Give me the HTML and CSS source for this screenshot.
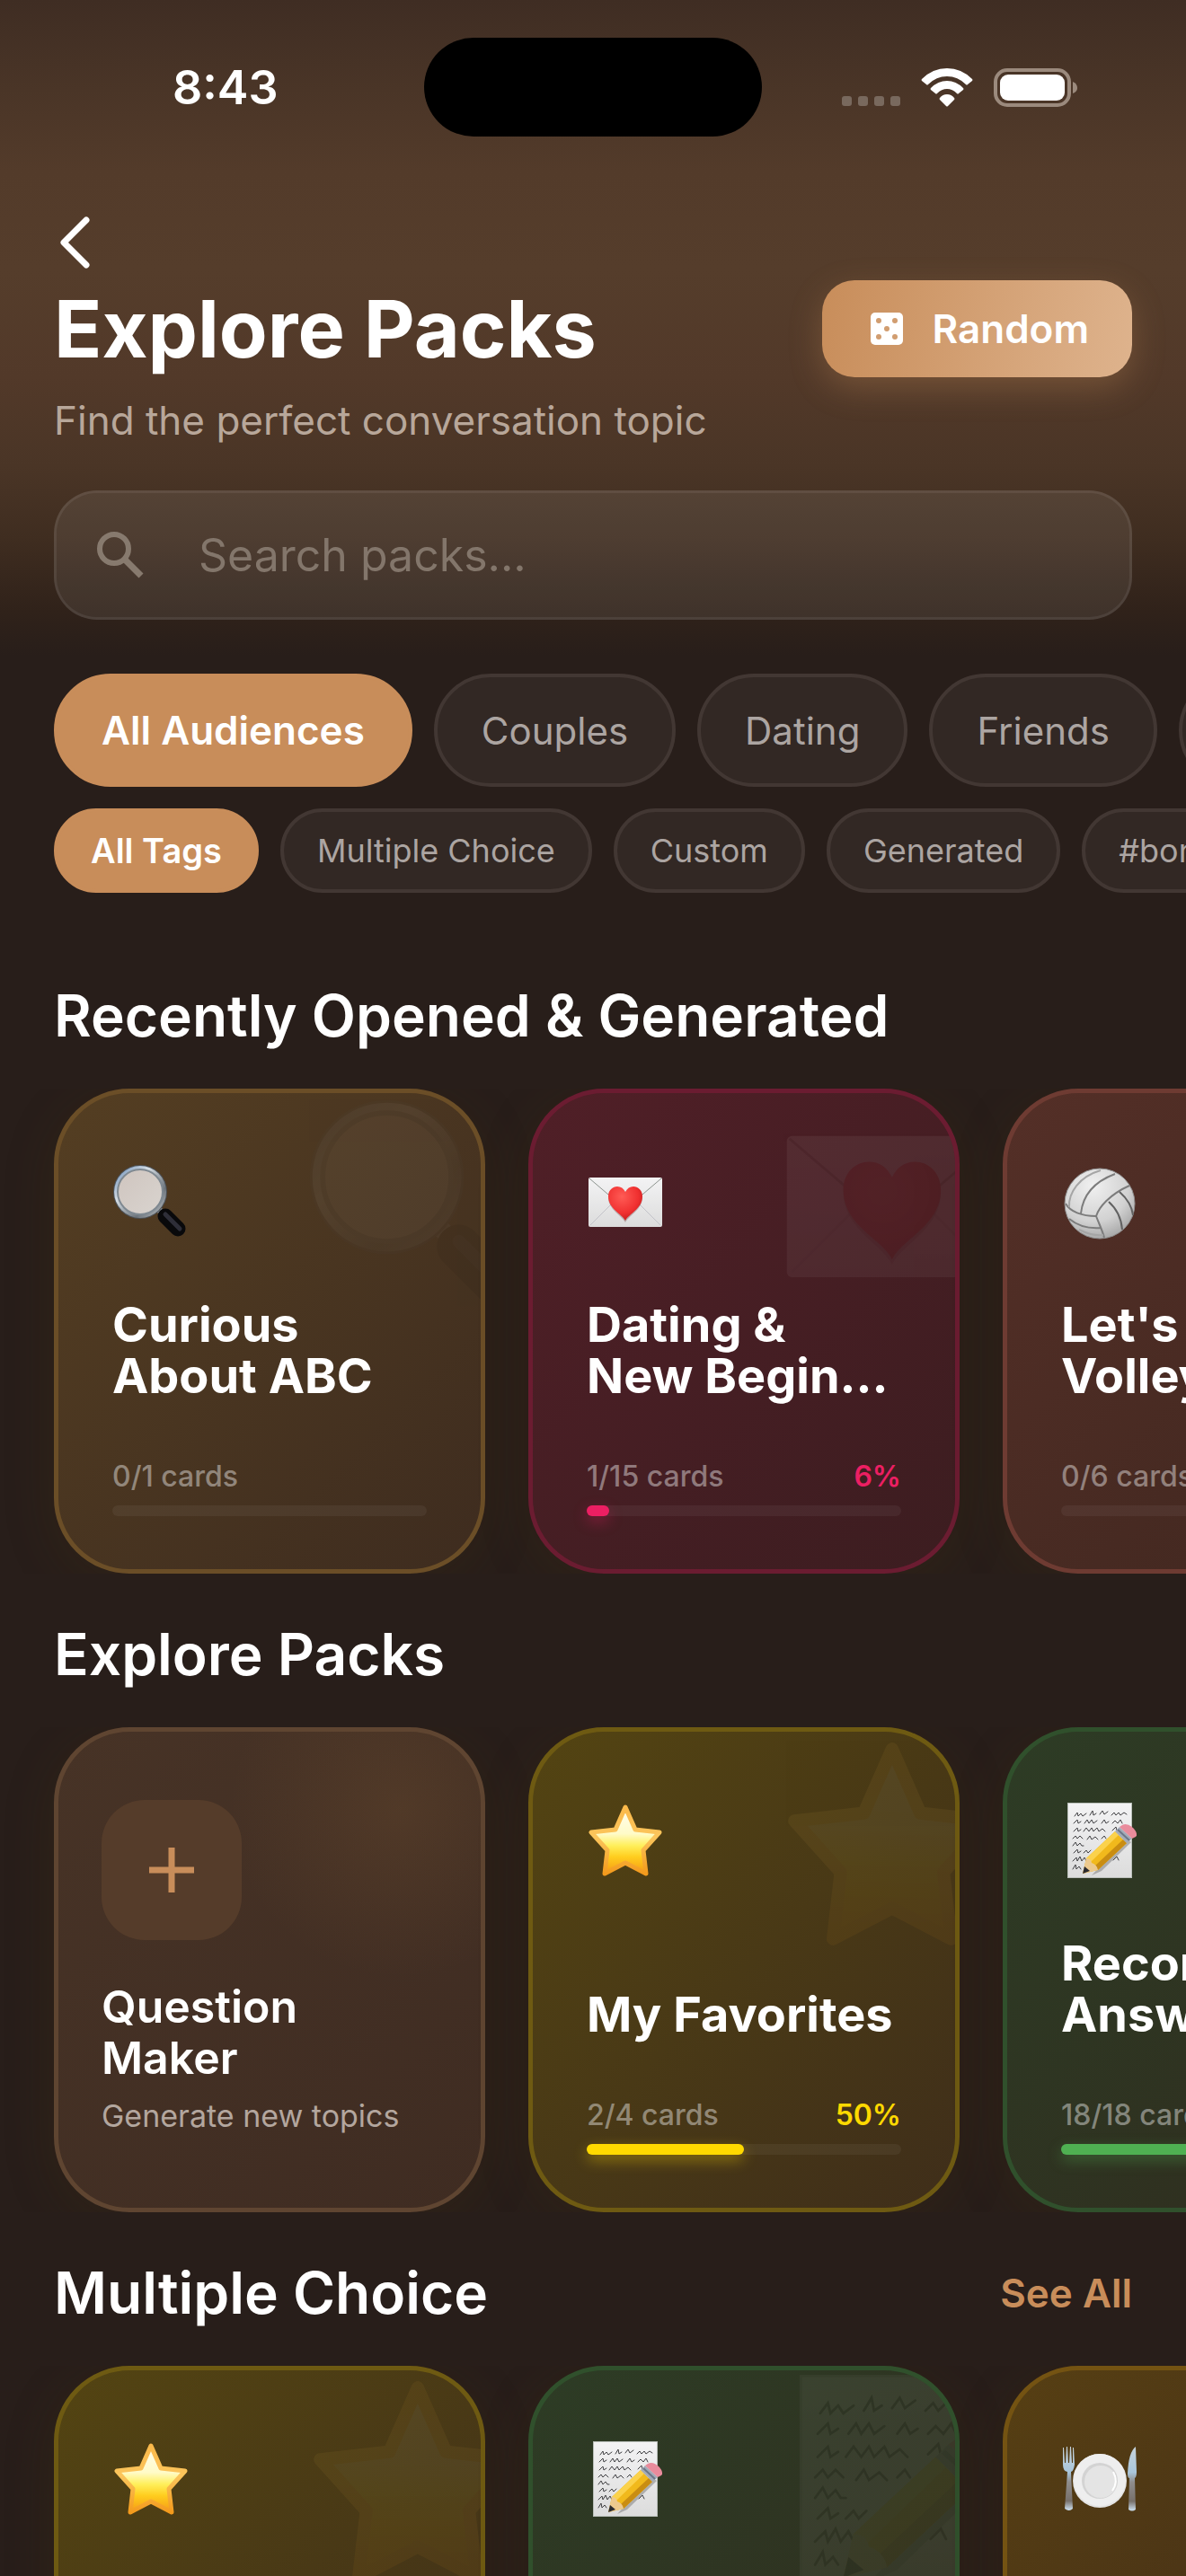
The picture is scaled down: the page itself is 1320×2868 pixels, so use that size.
FILE: index.html
```html
<!DOCTYPE html>
<html lang="en">
  <head>
    <meta charset="UTF-8" />
    <meta name="viewport" content="width=device-width, initial-scale=1.0" />
    <title>Explore Packs</title>
    <link rel="stylesheet" href="styles.css">
  </head>
  <body>
    <!-- Emoji symbols, shared by the small icon and the faded one behind it -->
    <svg class="sprite" aria-hidden="true">
      <defs>
        <linearGradient id="lens-ring" x1="0" y1="0" x2="1" y2="1">
          <stop offset="0" stop-color="#5f86b5" />
          <stop offset="0.35" stop-color="#d5dde4" />
          <stop offset="0.7" stop-color="#6d757c" />
          <stop offset="1" stop-color="#c9ced2" />
        </linearGradient>
        <linearGradient id="lens-glass" x1="0" y1="0" x2="1" y2="1">
          <stop offset="0" stop-color="#cfc5bf" />
          <stop offset="1" stop-color="#d9d4cf" />
        </linearGradient>
        <linearGradient id="paper" x1="0" y1="0" x2="0" y2="1">
          <stop offset="0" stop-color="#f3f3f4" />
          <stop offset="1" stop-color="#dcdcdc" />
        </linearGradient>
        <radialGradient id="heart" cx="0.4" cy="0.3" r="0.8">
          <stop offset="0" stop-color="#ff5b55" />
          <stop offset="0.6" stop-color="#f03030" />
          <stop offset="1" stop-color="#b81717" />
        </radialGradient>
        <radialGradient id="ball" cx="0.4" cy="0.25" r="0.85">
          <stop offset="0" stop-color="#f0f0f0" />
          <stop offset="0.6" stop-color="#d2d2d2" />
          <stop offset="1" stop-color="#9b9b9b" />
        </radialGradient>
        <linearGradient id="star" x1="0" y1="0" x2="0" y2="1">
          <stop offset="0" stop-color="#fffef0" />
          <stop offset="0.4" stop-color="#fffbc8" />
          <stop offset="0.58" stop-color="#ffef5a" />
          <stop offset="0.75" stop-color="#ffcd1e" />
          <stop offset="1" stop-color="#f59a14" />
        </linearGradient>
        <linearGradient id="star-edge" x1="0" y1="0" x2="0" y2="1">
          <stop offset="0" stop-color="#fbb94a" />
          <stop offset="0.45" stop-color="#fbc55c" />
          <stop offset="1" stop-color="#f39a1c" />
        </linearGradient>
        <linearGradient id="metal" x1="0" y1="0" x2="0" y2="1">
          <stop offset="0" stop-color="#c6d2da" />
          <stop offset="0.4" stop-color="#a9c6db" />
          <stop offset="0.55" stop-color="#8f8d8d" />
          <stop offset="0.85" stop-color="#77706b" />
          <stop offset="1" stop-color="#cfe3f3" />
        </linearGradient>

        <symbol id="magnifier" viewBox="0 0 84 84">
          <path d="M50 49L57 56" stroke="#8b9196" stroke-width="7" />
          <path d="M59 58L73 72" stroke="#09090b" stroke-width="17" stroke-linecap="round" />
          <path d="M59 56L75 72" stroke="#2e2e38" stroke-width="5" stroke-linecap="round" />
          <circle cx="31" cy="31" r="30" fill="#4c5157" />
          <circle cx="31" cy="31" r="29" fill="url(#lens-ring)" />
          <circle cx="31" cy="31" r="25" fill="url(#lens-glass)" stroke="#7f8991" stroke-width="2" />
        </symbol>

        <symbol id="letter" viewBox="0 0 84 84">
          <rect x="2" y="15" width="82" height="55" rx="2" fill="url(#paper)" />
          <path d="M4 68L34 38M82 68L52 38" stroke="#c3c3c9" fill="none" />
          <path d="M3 16L37 45Q43 49 49 45L83 16" stroke="#8d948f" fill="none" />
          <path d="M43 65C39 57 24 51 24 37C24 29 29 26 34 26C38 26 41 28 43 32C45 28 48 26 52 26C57 26 62 29 62 37C62 51 47 57 43 65Z" fill="#7a5a5a" opacity="0.4" />
          <path d="M43 63C39 55 24 50 24 36C24 29 29 25 34 25C38 25 41 27 43 31C45 27 48 25 52 25C57 25 62 29 62 36C62 50 47 55 43 63Z" fill="url(#heart)" />
        </symbol>

        <symbol id="volleyball" viewBox="0 0 84 84">
          <circle cx="43" cy="44" r="39" fill="url(#ball)" stroke="#8f8f8f" />
          <g fill="none" stroke="#7c7c7c" stroke-width="2">
            <path d="M39 58C23 58 10 53 5 44" />
            <path d="M39 58C42 48 54 34 76 24" />
            <path d="M39 58C42 66 46 74 48 82" />
            <path d="M22 55C24 36 36 20 60 11" />
            <path d="M9 48C8 32 20 14 44 7" stroke="#a5a5a5" />
            <path d="M53 42C62 50 67 60 68 73" stroke="#626262" />
            <path d="M65 31C73 38 79 48 80 57" stroke="#626262" />
            <path d="M9 61C20 70 34 72 45 71" />
            <path d="M20 73C30 78 40 80 47 79" stroke="#a5a5a5" />
          </g>
        </symbol>

        <symbol id="gold-star" viewBox="0 0 84 84">
          <path d="M43 5L54 30L81 33L63 53L66 79L43 67L20 79L23 53L5 33L32 30Z" fill="url(#star)" stroke="url(#star-edge)" stroke-width="5" stroke-linejoin="round" />
        </symbol>

        <symbol id="memo" viewBox="0 0 84 84">
          <rect x="7" y="0" width="72" height="84" fill="#b9bfb9" />
          <rect x="8" y="1" width="70" height="82" fill="url(#paper)" />
          <g fill="none" stroke="#3f3f42" stroke-linecap="round">
            <path d="M15 15l3-4 1 4 3-3 2 3 4-3M32 14l3-5 1 5 3-2M43 13l3-4 2 4 4-3M56 14l3-3 2 3 3-3 2 3 4-3 3 2" />
            <path d="M14 23l4-4 1 4 3-2M26 23l3-4 2 4 3-4 2 4 4-3M45 23l3-4 2 4 3-2M57 23l3-3 3 3 3-4 2 4" />
            <path d="M14 32l4-4 1 4 3-2M25 32l3-4 3 4 3-4 2 4 4-4 2 4 4-3 3 3M57 31l4-4 1 4" />
            <path d="M13 40l3-3 2 3 3-3 3 3M29 41l3-4 2 4 4-3 3 3M45 40l3-3 2 3" />
            <path d="M13 48l3-4 2 4 3-3 2 3h2" />
            <path d="M14 56l4-4 1 4 3-2M25 56l3-3 2 3 3-3M37 56l3-3 2 2" />
            <path d="M13 65l4-4 1 4 3-5 2 5 3-4 2 4M58 64l4-4 2 4" />
            <path d="M13 74l3-5 1 5 3-3 2 3M27 74l3-3" />
          </g>
          <path d="M34 81L45 76L78 44L72 40Z" fill="#6d6d6d" opacity="0.45" />
          <path d="M24 79L28 62L60 32L73 45L41 75Z" fill="#f1b91c" />
          <path d="M28 62L60 32L64 36L33 66Z" fill="#fbd24c" />
          <path d="M37 71L69 41L73 45L41 75Z" fill="#c98d12" />
          <path d="M24 79L28 62Q33 62 34 67Q40 69 41 75Z" fill="#ecc98e" />
          <path d="M24 79L26 71L32 76Z" fill="#2b2b30" />
          <path d="M60 32L65 27L79 40L73 45Z" fill="#a3abb8" />
          <path d="M63 30L76 42" stroke="#6b7788" stroke-width="2" />
          <path d="M65 27L68 25Q74 22 81 29Q86 35 83 38L79 40Z" fill="#e98b9c" />
        </symbol>

        <symbol id="dinner" viewBox="0 0 84 84">
          <circle cx="43" cy="44" r="30" fill="#e3e3e3" />
          <circle cx="43" cy="43" r="29" fill="#eeeeee" />
          <circle cx="43" cy="44" r="20" fill="#d3d3d3" />
          <circle cx="44" cy="45" r="18" fill="#e4e4e4" />
          <path d="M58 34Q64 45 57 55" fill="none" stroke="#ffffff" stroke-width="2" />
          <path d="M2 7L3 7L4 24H5L6 6H7L8 24H9L10 6H11L12 24H13L13 7H14L15 26Q14 33 11 34L13 75Q9 79 4 75L7 34Q2 33 2 26Z" fill="url(#metal)" />
          <path d="M83 6Q75 12 74 36Q74 41 76 41L75 76Q79 79 83 76L82 41Q84 40 84 34Z" fill="url(#metal)" />
        </symbol>
      </defs>
    </svg>

    <div class="screen">
      <div class="status-bar">
        <span class="time">8:43</span>
        <span class="island"></span>
        <div class="status-icons">
          <svg width="65" height="43" viewBox="0 0 65 43" fill="#fff" opacity="0.25">
            <rect x="0" y="31" width="11" height="11" rx="3" />
            <rect x="18" y="31" width="11" height="11" rx="3" />
            <rect x="36" y="31" width="11" height="11" rx="3" />
            <rect x="54" y="31" width="11" height="11" rx="3" />
          </svg>
          <svg width="58" height="43" viewBox="0 0 58 43" fill="#fff">
            <path d="M1 12Q13 0 29 0Q45 0 57 12Q58 13 57 14L52 18Q51 19 50 18Q41 9 29 9Q17 9 8 18Q7 19 6 18L1 14Q0 13 1 12Z" />
            <path d="M11 22Q19 14 29 14Q39 14 47 22Q48 23 47 24L42 28Q41 29 40 28Q35 23 29 23Q23 23 18 28Q17 29 16 28L11 24Q10 23 11 22Z" />
            <path d="M21 33Q24 29 29 29Q34 29 37 33Q38 34 37 35L30 42Q29 43 28 42L21 35Q20 34 21 33Z" />
          </svg>
          <svg width="94" height="43" viewBox="0 0 94 43">
            <rect x="2" y="2" width="82" height="39" rx="13" fill="none" stroke="#9b8a7d" stroke-width="4" />
            <rect x="7" y="7" width="72" height="29" rx="9" fill="#fff" />
            <path d="M88 15Q93 17 93 22Q93 26 88 28Z" fill="#9b8a7d" />
          </svg>
        </div>
      </div>

      <header class="header">
        <button class="back" aria-label="Back">
          <svg width="46" height="72" viewBox="0 0 46 72" fill="none" stroke="#fff" stroke-width="7" stroke-linecap="round" stroke-linejoin="round">
            <path d="M36 11L11 36L36 61" />
          </svg>
        </button>
        <div class="title-row">
          <h1>Explore Packs</h1>
          <button class="random">
            <svg width="36" height="36" viewBox="0 0 36 36">
              <rect width="36" height="36" rx="5" fill="#fff" />
              <g fill="#d19d70">
                <circle cx="9" cy="9" r="3" />
                <circle cx="27" cy="9" r="3" />
                <circle cx="18" cy="18" r="3" />
                <circle cx="9" cy="27" r="3" />
                <circle cx="27" cy="27" r="3" />
              </g>
            </svg>
            Random
          </button>
        </div>
        <p class="subtitle">Find the perfect conversation topic</p>
        <div class="search">
          <label for="search" aria-label="Search packs">
            <svg width="54" height="54" viewBox="0 0 54 54" fill="none" stroke="#877a6e" stroke-width="6">
              <circle cx="20" cy="20" r="16" />
              <path d="M32 32L50 50" stroke-width="7" />
            </svg>
          </label>
          <input type="text" id="search" placeholder="Search packs..." />
        </div>
      </header>

      <div class="filters">
        <div class="chips">
          <button class="chip active">All Audiences</button>
          <button class="chip">Couples</button>
          <button class="chip">Dating</button>
          <button class="chip">Friends</button>
          <button class="chip">Family</button>
        </div>
        <div class="chips tags">
          <button class="chip active">All Tags</button>
          <button class="chip">Multiple Choice</button>
          <button class="chip">Custom</button>
          <button class="chip">Generated</button>
          <button class="chip">#bonding</button>
        </div>
      </div>

      <section>
        <div class="section-header">
          <h2>Recently Opened &amp; Generated</h2>
        </div>
        <div class="cards">
          <a href="#" class="card amber">
            <svg class="ghost"><use href="#magnifier" /></svg>
            <svg class="emoji"><use href="#magnifier" /></svg>
            <h3>Curious About ABC</h3>
            <div class="stats"><span>0/1 cards</span></div>
            <div class="bar"></div>
          </a>
          <a href="#" class="card pink">
            <svg class="ghost"><use href="#letter" /></svg>
            <svg class="emoji"><use href="#letter" /></svg>
            <h3>Dating &amp;<br />New Begin...</h3>
            <div class="stats"><span>1/15 cards</span><b>6%</b></div>
            <div class="bar"><div class="fill" style="width: 7%"></div></div>
          </a>
          <a href="#" class="card rust">
            <svg class="ghost"><use href="#volleyball" /></svg>
            <svg class="emoji"><use href="#volleyball" /></svg>
            <h3>Let's Play Volleyball</h3>
            <div class="stats"><span>0/6 cards</span></div>
            <div class="bar"></div>
          </a>
        </div>
      </section>

      <section>
        <div class="section-header">
          <h2>Explore Packs</h2>
        </div>
        <div class="cards">
          <a href="#" class="card maker">
            <div class="plus">
              <svg width="50" height="50" viewBox="0 0 50 50" stroke="#c88d5a" stroke-width="7">
                <path d="M25 0V50M0 25H50" />
              </svg>
            </div>
            <h3>Question<br />Maker</h3>
            <p>Generate new topics</p>
          </a>
          <a href="#" class="card yellow">
            <svg class="ghost"><use href="#gold-star" /></svg>
            <svg class="emoji"><use href="#gold-star" /></svg>
            <h3>My Favorites</h3>
            <div class="stats"><span>2/4 cards</span><b>50%</b></div>
            <div class="bar"><div class="fill" style="width: 50%"></div></div>
          </a>
          <a href="#" class="card green">
            <svg class="ghost"><use href="#memo" /></svg>
            <svg class="emoji"><use href="#memo" /></svg>
            <h3>Recorded Answers</h3>
            <div class="stats"><span>18/18 cards</span><b>100%</b></div>
            <div class="bar"><div class="fill" style="width: 100%"></div></div>
          </a>
        </div>
      </section>

      <section>
        <div class="section-header">
          <h2>Multiple Choice</h2>
          <a href="#" class="see-all">See All</a>
        </div>
        <div class="cards">
          <a href="#" class="card yellow">
            <svg class="ghost"><use href="#gold-star" /></svg>
            <svg class="emoji"><use href="#gold-star" /></svg>
          </a>
          <a href="#" class="card green">
            <svg class="ghost"><use href="#memo" /></svg>
            <svg class="emoji"><use href="#memo" /></svg>
          </a>
          <a href="#" class="card orange">
            <svg class="ghost"><use href="#dinner" /></svg>
            <svg class="emoji"><use href="#dinner" /></svg>
          </a>
        </div>
      </section>
    </div>
  </body>
</html>
```
FILE: styles.css
```css
* {
  box-sizing: border-box;
}
body {
  margin: 0;
  background: #281e1a;
  color: #fff;
  font-family: Inter, "Noto Sans", sans-serif;
}
h1,
h2,
h3,
p {
  margin: 0;
}
a {
  color: inherit;
  text-decoration: none;
}
button {
  border: none;
  color: #fff;
  font-family: inherit;
  cursor: pointer;
}
/* not display: none, the gradients stop working */
.sprite {
  position: absolute;
  width: 0;
  height: 0;
}
.screen {
  height: 100vh;
  overflow-x: hidden;
  overflow-y: auto;
  scrollbar-width: none;
  background: linear-gradient(
      #3f2d23 0,
      #4a3527 100px,
      #533b2a 190px,
      #553d2b 300px,
      #523929 420px,
      #4a3526 520px,
      #3f2d20 600px,
      #30221a 680px,
      #281e1a 730px
    )
    no-repeat;
}

.status-bar {
  display: grid;
  grid-template-columns: 1fr auto 1fr;
  align-items: center;
  height: 194px;
}
.time {
  padding-left: 192px;
  font-size: 52px;
  font-weight: 600;
}
.island {
  width: 376px;
  height: 110px;
  border-radius: 55px;
  background: #000;
}
.status-icons {
  display: flex;
  justify-content: flex-end;
  gap: 23px;
  padding-right: 120px;
}

.header {
  padding: 40px 60px 0;
}
.back {
  display: block;
  height: 72px;
  padding: 0;
  background: none;
}
.title-row {
  display: flex;
  justify-content: space-between;
  align-items: center;
  margin-top: 6px;
}
h1 {
  font-size: 88px;
  line-height: 108px;
}
.random {
  display: flex;
  align-items: center;
  gap: 32px;
  height: 108px;
  padding: 0 48px 0 54px;
  border-radius: 36px;
  background: linear-gradient(100deg, #c88d5a, #deb38d);
  box-shadow: 0 12px 36px rgba(200, 141, 90, 0.3);
  font-size: 44px;
  font-weight: 600;
}
.subtitle {
  margin-top: 20px;
  color: #b8a79a;
  font-size: 44px;
  line-height: 56px;
}
.search {
  display: flex;
  align-items: center;
  gap: 60px;
  height: 144px;
  margin-top: 50px;
  padding: 0 44px;
  border: 3px solid rgba(255, 255, 255, 0.14);
  border-radius: 48px;
  background: rgba(255, 255, 255, 0.08);
  background-clip: padding-box;
}
.search label {
  display: flex;
}
.search input {
  flex: 1;
  min-width: 0;
  padding: 0;
  border: none;
  outline: none;
  background: none;
  color: #fff;
  font-family: inherit;
  font-size: 50px;
}
.search input::placeholder {
  color: #83766b;
  opacity: 1;
}

.filters {
  padding: 60px 0 47px;
}
.chips {
  display: flex;
  gap: 24px;
  padding: 0 60px;
  overflow-x: auto;
  scrollbar-width: none;
}
.chip {
  flex: none;
  height: 126px;
  padding: 0 49px;
  border: 4px solid #423733;
  border-radius: 63px;
  background: #322824;
  color: #aca5a2;
  font-size: 42px;
}
.tags {
  margin-top: 24px;
}
.tags .chip {
  height: 94px;
  padding: 0 37px;
  font-size: 36px;
}
.chip.active {
  border-color: #c88d5a;
  background: #c88d5a;
  color: #fff;
  font-size: 44px;
  font-weight: 600;
}
.tags .chip.active {
  font-size: 38px;
}

.section-header {
  display: flex;
  justify-content: space-between;
  align-items: center;
  padding: 50px 60px 41px;
}
h2 {
  font-size: 64px;
  font-weight: 600;
  line-height: 80px;
}
.see-all {
  color: #c88d5a;
  font-size: 44px;
  font-weight: 600;
}
.cards {
  display: flex;
  gap: 48px;
  padding: 0 60px;
  overflow-x: auto;
  scrollbar-width: none;
}
.card {
  position: relative;
  display: flex;
  flex: none;
  flex-direction: column;
  width: 480px;
  height: 540px;
  padding: 79px 60px 59px;
  border: 5px solid;
  border-radius: 84px;
  overflow: hidden;
  box-shadow: 0 12px 60px rgba(90, 60, 10, 0.16);
}
.emoji {
  width: 84px;
  height: 84px;
}
.ghost {
  position: absolute;
  top: 5px;
  right: -47px;
  width: 240px;
  height: 240px;
  opacity: 0.06;
}
.card h3 {
  margin-top: auto;
  margin-bottom: 64px;
  font-size: 54px;
  line-height: 57px;
}
.stats {
  display: flex;
  justify-content: space-between;
  color: rgba(255, 255, 255, 0.42);
  font-size: 32px;
  font-weight: 500;
  line-height: 40px;
}
.stats b {
  color: var(--accent);
  font-weight: 600;
}
.bar {
  height: 12px;
  margin-top: 12px;
  border-radius: 6px;
  background: rgba(255, 255, 255, 0.05);
}
.fill {
  height: 100%;
  border-radius: 6px;
  background: var(--accent);
  box-shadow: 0 6px 16px color-mix(in srgb, var(--accent) 40%, transparent);
}

.amber {
  border-color: #6b4e27;
  background: linear-gradient(135deg, #543e22, #3e2c1f);
}
.pink {
  --accent: #ec1f63;
  border-color: #6b1c31;
  background: linear-gradient(135deg, #501f27, #3c1d20);
}
.rust {
  border-color: #6e3b32;
  background: linear-gradient(135deg, #542f27, #3f271f);
}
.yellow {
  --accent: #ffd900;
  border-color: #6e5a12;
  background: linear-gradient(135deg, #534412, #3f2e1a);
}
.green {
  --accent: #4fb052;
  border-color: #30502c;
  background: linear-gradient(135deg, #2d3c25, #302c1e);
}
.orange {
  border-color: #745312;
  background: linear-gradient(135deg, #563f13, #40291a);
}

.maker {
  padding: 76px 48px 0;
  border-color: #5f4531;
  background: radial-gradient(circle 190px at 380px 85px, rgba(200, 141, 70, 0.1), transparent),
    linear-gradient(135deg, #473326, #3f2c22);
}
.plus {
  display: flex;
  justify-content: center;
  align-items: center;
  width: 156px;
  height: 156px;
  border-radius: 48px;
  background: #553c2a;
}
.maker h3 {
  margin: 46px 0 14px;
  font-size: 50px;
  font-weight: 600;
}
.maker p {
  color: #b3a69e;
  font-size: 34px;
  line-height: 44px;
}
```
